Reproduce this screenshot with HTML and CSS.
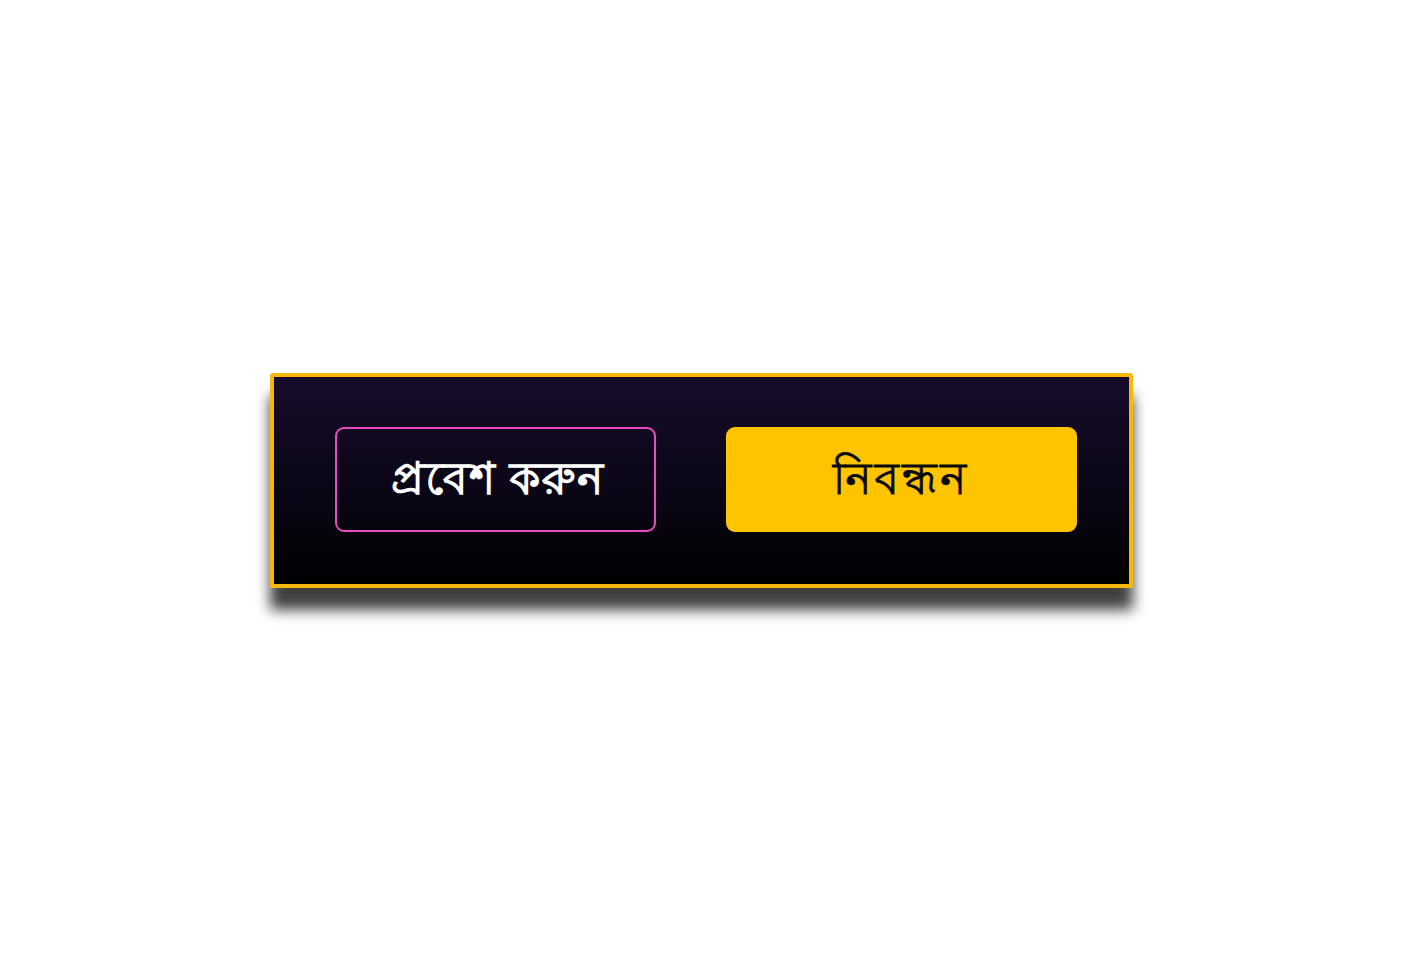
FILE: index.html
```html
<!DOCTYPE html>
<html lang="bn">
<head>
  <meta charset="UTF-8">
  <title>প্রবেশ / নিবন্ধন</title>
  <link rel="stylesheet" href="styles.css">
</head>
<body>
  <div class="auth-panel">
    <button class="btn btn-login">প্রবেশ করুন</button>
    <button class="btn btn-register">নিবন্ধন</button>
  </div>
</body>
</html>
```

FILE: styles.css
```css
html, body {
  margin: 0;
  height: 100%;
}
body {
  background: #fff;
  display: flex;
  align-items: center;
  justify-content: center;
  font-family: "Noto Sans", "Lohit Bengali", "FreeSans", sans-serif;
}
.auth-panel {
  display: flex;
  gap: 70px;
  width: 863px;
  box-sizing: border-box;
  padding: 50px 52px 52px 61px;
  margin-left: -2px;
  border: 4px solid #f6b90b;
  border-radius: 3px;
  background: linear-gradient(to bottom, #170d2b 0%, #0b0616 55%, #010002 100%);
  box-shadow: 0 22px 14px rgba(0, 0, 0, 0.75);
}
.btn {
  height: 105px;
  border-radius: 9px;
  font-family: inherit;
  font-size: 44px;
  letter-spacing: 1.5px;
  cursor: pointer;
  padding: 5px 0 0;
}
.btn-login {
  width: 321px;
  padding-left: 6px;
  background: transparent;
  border: 2px solid #e94cc0;
  color: #fff;
  font-weight: bold;
}
.btn-register {
  width: 351px;
  background: #ffc400;
  border: none;
  color: #0a0a0a;
  letter-spacing: 3px;
  -webkit-text-stroke: 0.8px #0a0a0a;
}
```
